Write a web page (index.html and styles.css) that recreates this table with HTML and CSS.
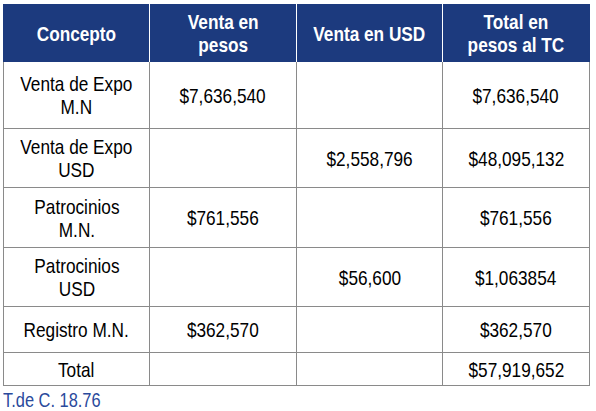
FILE: index.html
```html
<!DOCTYPE html>
<html lang="es">
<head>
<meta charset="utf-8">
<link rel="stylesheet" href="styles.css">
</head>
<body>
<table class="sales">
  <colgroup>
    <col class="c1"><col class="c2"><col class="c3"><col class="c4">
  </colgroup>
  <thead>
    <tr class="head">
      <th><span class="t">Concepto</span></th>
      <th><span class="t">Venta en<br>pesos</span></th>
      <th><span class="t">Venta en USD</span></th>
      <th class="last"><span class="t">Total en<br>pesos al TC</span></th>
    </tr>
  </thead>
  <tbody>
    <tr class="r1">
      <td><span class="t">Venta de Expo<br>M.N</span></td>
      <td><span class="t">$7,636,540</span></td>
      <td></td>
      <td><span class="t">$7,636,540</span></td>
    </tr>
    <tr class="r2">
      <td><span class="t">Venta de Expo<br>USD</span></td>
      <td></td>
      <td><span class="t">$2,558,796</span></td>
      <td><span class="t">$48,095,132</span></td>
    </tr>
    <tr class="r3">
      <td><span class="t">Patrocinios<br>M.N.</span></td>
      <td><span class="t">$761,556</span></td>
      <td></td>
      <td><span class="t">$761,556</span></td>
    </tr>
    <tr class="r4">
      <td><span class="t">Patrocinios<br>USD</span></td>
      <td></td>
      <td><span class="t">$56,600</span></td>
      <td><span class="t">$1,063854</span></td>
    </tr>
    <tr class="r5">
      <td><span class="t">Registro M.N.</span></td>
      <td><span class="t">$362,570</span></td>
      <td></td>
      <td><span class="t">$362,570</span></td>
    </tr>
    <tr class="r6">
      <td><span class="t">Total</span></td>
      <td></td>
      <td></td>
      <td><span class="t">$57,919,652</span></td>
    </tr>
  </tbody>
</table>
<p class="note"><span class="nt">T.de C. 18.76</span></p>
</body>
</html>
```
FILE: styles.css
```css
html, body {
  margin: 0;
  padding: 0;
  background: #ffffff;
}
body {
  font-family: "Liberation Sans", Arial, sans-serif;
  color: #000000;
}
.t {
  display: inline-block;
  transform: scaleX(0.82);
  transform-origin: center center;
  white-space: nowrap;
}
.sales {
  border-collapse: separate;
  border-spacing: 0;
  margin: 4px 0 0 3px;
  table-layout: fixed;
  width: 587px;
}
.c1 { width: 147px; }
.c2 { width: 147px; }
.c3 { width: 146px; }
.c4 { width: 147px; }
.sales th {
  background: #1c3a7e;
  color: #ffffff;
  font-weight: bold;
  font-size: 21px;
  line-height: 23px;
  text-align: center;
  vertical-align: middle;
  padding: 0;
  height: 58px;
  border-right: 1px solid #ffffff;
}
.sales th.last {
  border-right: 1px solid #1c3a7e;
}
.sales td {
  font-size: 21px;
  line-height: 23px;
  text-align: center;
  vertical-align: middle;
  padding: 0;
  border-right: 1px solid #8a8a8a;
  border-bottom: 1px solid #8a8a8a;
}
.sales td:first-child {
  border-left: 1px solid #8a8a8a;
}
.r1 td { height: 66px; }
.r2 td { height: 58px; }
.r3 td { height: 59px; }
.r4 td { height: 58px; }
.r5 td { height: 45px; }
.r6 td { height: 32px; }
.note {
  margin: 3px 0 0 3px;
  font-size: 20px;
  line-height: 22px;
  color: #2a4a9c;
}
.nt {
  display: inline-block;
  transform: scaleX(0.82);
  transform-origin: left center;
  white-space: nowrap;
}
```
